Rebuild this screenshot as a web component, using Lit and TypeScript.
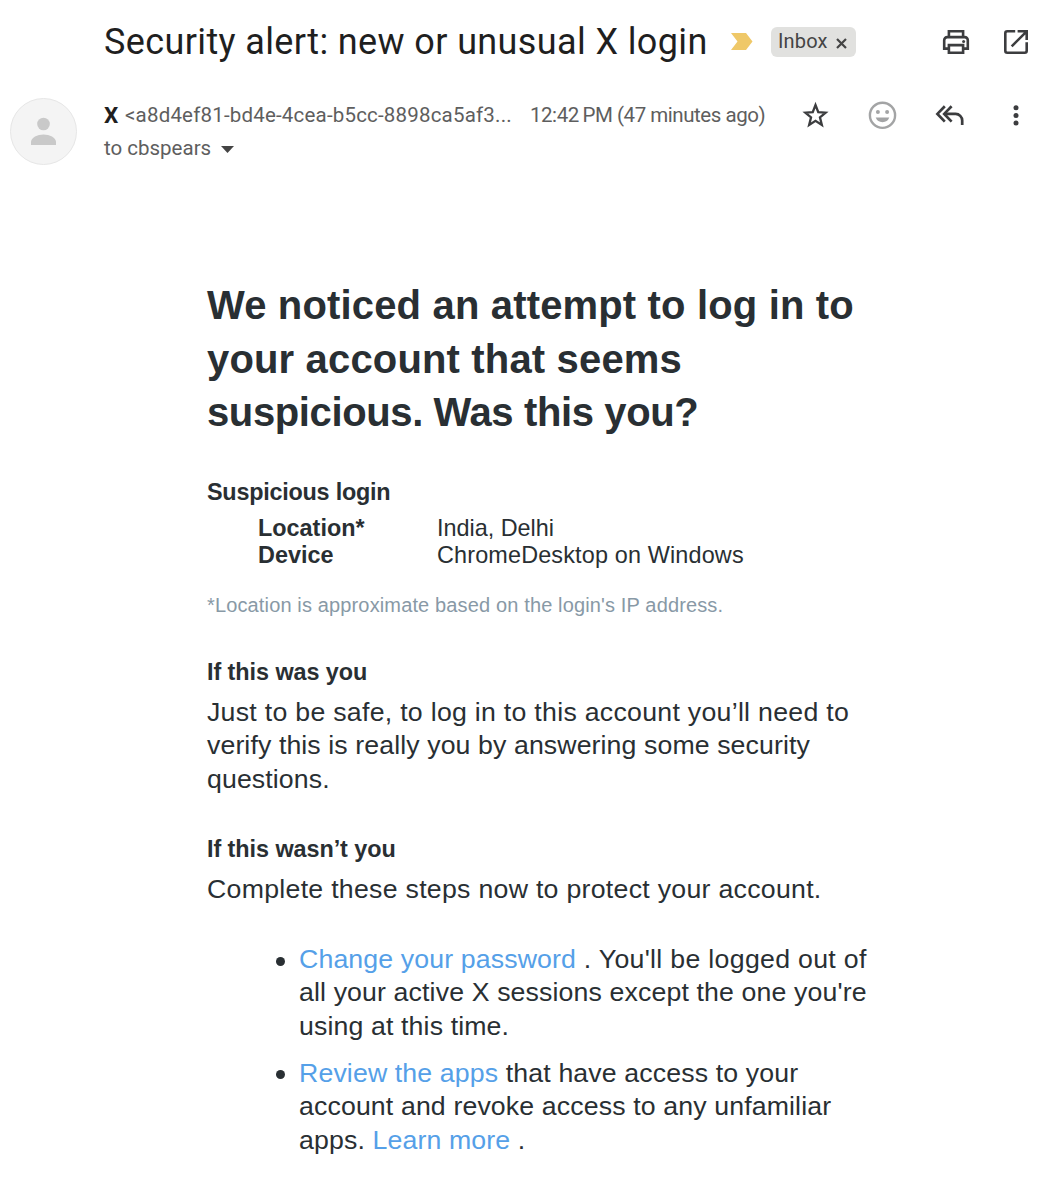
import { LitElement, html, css, svg } from "lit";
import { customElement, property } from "lit/decorators.js";

const ICONS: Record<string, unknown> = {
  print: svg`<g fill="none" stroke="#3c3d3f" stroke-width="2.6">
      <path d="M9.9 11.6V6.2h14.2v5.4M9.4 23.6H5.2v-8.4a3.1 3.1 0 0 1 3.1-3.1h17.4a3.1 3.1 0 0 1 3.1 3.1v8.4h-4.2"/>
      <path d="M9.9 20.1h14.2v7.7H9.9z"/></g>
      <circle cx="24.6" cy="16.6" r="1.5" fill="#3c3d3f"/>`,
  open: svg`<g fill="none" stroke="#3c3d3f" stroke-width="2.6">
      <path d="M16.2 6.3H8.3a2 2 0 0 0-2 2v17.4a2 2 0 0 0 2 2h17.4a2 2 0 0 0 2-2v-8.4"/>
      <path d="M18.6 6.3h9.1V15M27.2 6.8L12.7 21.3"/></g>`,
  star: svg`<path fill="none" stroke="#3c3d3f" stroke-width="2.3" stroke-linejoin="miter"
      d="M16.5 7l2.75 7.1 7.4.5-5.7 4.8 1.9 7.6-6.35-4.1-6.35 4.1 1.9-7.6-5.7-4.8 7.4-.5z"/>`,
  smile: svg`<circle cx="16.5" cy="17.3" r="12.6" fill="none" stroke="#a3a4a5" stroke-width="2.4"/>
      <circle cx="11.9" cy="14" r="2" fill="#a3a4a5"/><circle cx="21.1" cy="14" r="2" fill="#a3a4a5"/>
      <path fill="#a3a4a5" d="M9.7 19.5h13.6a7.3 7.3 0 0 1-13.6 0z"/>`,
  replyAll: svg`<g fill="none" stroke="#3c3d3f" stroke-width="2.7">
      <path d="M11.8 8.2L4.4 15.9l7.400 7.700M18.600 8.200l-7.400 7.700 7.400 7.700"/>
      <path d="M11.400 15.900h11.200a6.600 6.600 0 0 1 6.600 6.600v4.500"/></g>`,
  more: svg`<g fill="#3c3d3f"><circle cx="16" cy="9.8" r="2.5"/><circle cx="16" cy="17.4" r="2.5"/><circle cx="16" cy="25" r="2.5"/></g>`,
};

@customElement("tool-icon")
class ToolIcon extends LitElement {
  @property() name = "";
  static styles = css`
    :host { display: block; width: 34px; height: 34px; }
    .glyph { display: block; width: 34px; height: 34px; }
  `;
  render() {
    return html`<svg class="glyph" viewBox="0 0 34 34">${ICONS[this.name]}</svg>`;
  }
}

@customElement("mail-header")
class MailHeader extends LitElement {
  static styles = css`
    :host { display: block; height: 200px; font-family: Roboto, "Liberation Sans", sans-serif; color: #5e5e5e; white-space: nowrap; }
    .subject-row { display: flex; align-items: center; height: 84px; padding: 0 30px 0 104px; }
    .subject { margin: 0; width: 627px; font-size: 36px; font-weight: 400; line-height: 44px; color: #1f1f1f; letter-spacing: 0.38px; }
    .marker { width: 22px; height: 18px; margin-right: 18px; flex: none; }
    .chip { display: flex; align-items: center; box-sizing: border-box; width: 85px; height: 30px; padding-left: 7px; border-radius: 6px; background: #e1e1df; color: #444; font-size: 20px; letter-spacing: 0.15px; }
    .chip-label { margin-bottom: 2px; }
    .close { width: 11px; height: 11px; margin: 3px 0 0 8px; }
    .print { margin-left: 83px; }
    .open { margin-left: 26px; }
    .meta { display: flex; }
    .avatar { width: 67px; height: 67px; margin: 14px 27px 0 10px; flex: none; }
    .lines { display: flex; flex-direction: column; }
    .from { display: flex; align-items: center; height: 62px; font-size: 20.5px; }
    .name { width: 21px; font-size: 22.5px; font-weight: 700; color: #1f1f1f; }
    .address { width: 405px; letter-spacing: 0.19px; }
    .time { width: 269px; letter-spacing: -0.46px; }
    .to { display: flex; align-items: center; height: 26px; margin-top: -11px; font-size: 20.5px; gap: 10px; }
    .caret { width: 13px; height: 7px; margin-top: 3px; }
    .gap33 { margin-left: 33px; }
  `;
  render() {
    return html`
      <div class="subject-row">
        <h1 class="subject">Security alert: new or unusual X login</h1>
        <svg class="marker" viewBox="0 0 22 18"><path fill="#efc868" d="M0 0h15l6.5 8.5L15 17H0l6.5-8.5z"/></svg>
        <div class="chip"><span class="chip-label">Inbox</span><svg class="close" viewBox="0 0 11 11"><path d="M1 1l9 9M10 1l-9 9" stroke="#444" stroke-width="2.2"/></svg></div>
        <tool-icon class="print" name="print"></tool-icon>
        <tool-icon class="open" name="open"></tool-icon>
      </div>
      <div class="meta">
        <svg class="avatar" viewBox="0 0 67 67">
          <circle cx="33.5" cy="33.5" r="33" fill="#f4f4f4" stroke="#e6e6e6"/>
          <circle cx="33.5" cy="26" r="6.3" fill="#c9c9c9"/>
          <path fill="#c9c9c9" d="M21 47v-3c0-4.500 6.500-7.500 12.500-7.500S46 39.500 46 44v3z"/>
        </svg>
        <div class="lines">
          <div class="from">
            <span class="name">X</span>
            <span class="address">&lt;a8d4ef81-bd4e-4cea-b5cc-8898ca5af3...</span>
            <span class="time">12:42&#8201;PM (47 minutes ago)</span>
            <tool-icon name="star"></tool-icon>
            <tool-icon class="gap33" name="smile"></tool-icon>
            <tool-icon class="gap33" name="replyAll"></tool-icon>
            <tool-icon class="gap33" name="more"></tool-icon>
          </div>
          <div class="to"><span class="recipient">to cbspears</span><svg class="caret" viewBox="0 0 13 7"><path fill="#444" d="M0 0h13L6.5 7z"/></svg></div>
        </div>
      </div>`;
  }
}

@customElement("mail-body")
class MailBody extends LitElement {
  static styles = css`
    :host { display: block; padding: 79px 0 0 207px; font-family: "Liberation Sans", Arial, sans-serif; color: #292f33; white-space: nowrap; }
    .line { display: block; }
    .headline { margin: 0; font-size: 40px; line-height: 53.5px; font-weight: 700; letter-spacing: 0.16px; }
    .headline .tight { letter-spacing: -0.38px; }
    .label { margin: 0; font-size: 23.4px; line-height: 27px; font-weight: 700; letter-spacing: -0.06px; }
    .first { margin-top: 39px; letter-spacing: -0.24px; }
    .details { display: grid; grid-template-columns: 179px auto; margin: 9px 0 0 51px; font-size: 23.4px; line-height: 27px; }
    .key { font-weight: 700; }
    .value { margin: 0; }
    .device { letter-spacing: 0.16px; }
    .note { margin: 24px 0 0; font-size: 20px; line-height: 24px; color: #8899a6; letter-spacing: 0.14px; }
    .was { margin-top: 42px; }
    .wasnt { margin-top: 40px; }
    .text { margin: 10px 0 0; font-size: 26.7px; line-height: 33.5px; letter-spacing: 0.1px; }
    .wide { letter-spacing: 0.28px; }
    .wider { letter-spacing: 0.31px; }
    .steps { list-style: none; margin: 36.5px 0 0 69px; padding: 0; display: flex; flex-direction: column; gap: 13.5px; font-size: 26.7px; line-height: 33.4px; letter-spacing: 0.13px; }
    .step { display: flex; gap: 14px; }
    .dot { width: 9px; height: 9px; margin-top: 13.5px; border-radius: 50%; background: #292f33; flex: none; }
    .link { color: #55a0e8; text-decoration: none; }
  `;
  render() {
    return html`
      <h2 class="headline">
        <span class="line">We noticed an attempt to log in to</span>
        <span class="line">your account that seems</span>
        <span class="line tight">suspicious. Was this you?</span>
      </h2>
      <h3 class="label first">Suspicious login</h3>
      <dl class="details">
        <dt class="key">Location*</dt><dd class="value">India, Delhi</dd>
        <dt class="key">Device</dt><dd class="value device">ChromeDesktop on Windows</dd>
      </dl>
      <p class="note">*Location is approximate based on the login's IP address.</p>
      <h3 class="label was">If this was you</h3>
      <p class="text">
        <span class="line wide">Just to be safe, to log in to this account you’ll need to</span>
        <span class="line">verify this is really you by answering some security</span>
        <span class="line">questions.</span>
      </p>
      <h3 class="label wasnt">If this wasn’t you</h3>
      <p class="text wide">Complete these steps now to protect your account.</p>
      <ul class="steps">
        <li class="step"><span class="dot"></span><div class="copy">
          <span class="line"><a class="link">Change your password</a><span class="wider"> . You'll be logged out of</span></span>
          <span class="line">all your active X sessions except the one you're</span>
          <span class="line">using at this time.</span></div></li>
        <li class="step"><span class="dot"></span><div class="copy">
          <span class="line"><a class="link">Review the apps</a> that have access to your</span>
          <span class="line">account and revoke access to any unfamiliar</span>
          <span class="line">apps. <a class="link">Learn more</a> .</span></div></li>
      </ul>`;
  }
}

@customElement("app-root")
class AppRoot extends LitElement {
  static styles = css`
    :host { display: block; box-sizing: border-box; width: 100%; height: 1200px; overflow: hidden; background: #fff; }
  `;
  render() {
    return html`<mail-header></mail-header><mail-body></mail-body>`;
  }
}
